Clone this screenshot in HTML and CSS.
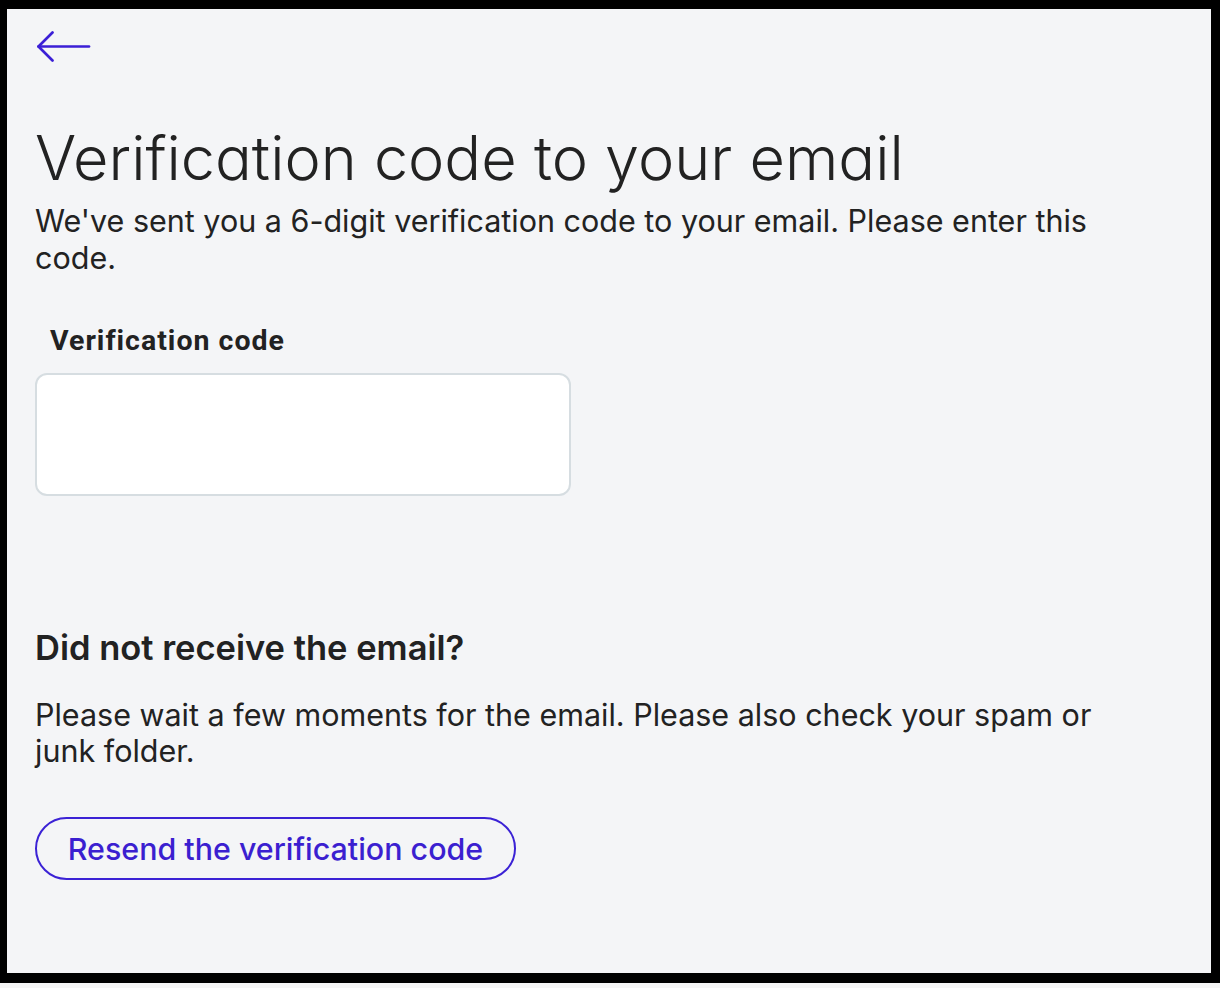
FILE: index.html
```html
<!DOCTYPE html>
<html lang="en">
<head>
<meta charset="utf-8">
<title>Verification code</title>
<link rel="stylesheet" href="styles.css">
</head>
<body>
<div class="frame">
  <main class="page">
    <a class="back" href="#" aria-label="Back">
      <svg width="56" height="34" viewBox="0 0 56 34" fill="none" stroke="currentColor" stroke-width="2.7" stroke-linecap="round" stroke-linejoin="round">
        <path d="M54 15.5H3.5"/>
        <path d="M17.5 1.5L3.5 15.5L17.5 29.5"/>
      </svg>
    </a>
    <h1 class="title">Verification code to your email</h1>
    <p class="lead">We've sent you a 6-digit verification code to your email. Please enter this code.</p>
    <label class="field-label" for="code">Verification code</label>
    <input class="field-input" id="code" type="text" inputmode="numeric">
    <h2 class="subtitle">Did not receive the email?</h2>
    <p class="note">Please wait a few moments for the email. Please also check your spam or junk folder.</p>
    <button class="resend" type="button">Resend the verification code</button>
  </main>
</div>
</body>
</html>
```

FILE: styles.css
```css
html, body {
  margin: 0;
  padding: 0;
  background: #f5f5f5;
}

.frame {
  box-sizing: border-box;
  height: 983px;
  border-style: solid;
  border-color: #000;
  border-width: 9px 9px 10px 7px;
  background: #f4f5f7;
}

.page {
  padding: 22px 28px 0 28px;
  font-family: Inter, "Noto Sans", sans-serif;
  color: #222;
}

.back {
  display: block;
  width: 56px;
  height: 34px;
  color: #3b1fd6;
}

.back svg {
  display: block;
}

.title {
  margin: 58px 0 0 0;
  font-size: 61.2px;
  line-height: 70px;
  font-weight: 300;
  font-feature-settings: "cv11" 1;
  color: #222;
}

.lead {
  margin: 9px 0 0 0;
  max-width: 1110px;
  font-size: 30.5px;
  line-height: 37px;
  font-weight: 400;
}

.field-label {
  display: block;
  margin: 48px 0 0 15px;
  font-family: Roboto, "Noto Sans", sans-serif;
  font-size: 28.5px;
  line-height: 34px;
  font-weight: 700;
  letter-spacing: 1px;
  color: #222;
}

.field-input {
  display: block;
  box-sizing: border-box;
  width: 536px;
  height: 123px;
  margin-top: 15px;
  border: 2px solid #d6dde1;
  border-radius: 12px;
  background: #fff;
  font-size: 28px;
  padding: 0 20px;
  outline: none;
}

.subtitle {
  margin: 131px 0 0 0;
  font-size: 34.5px;
  line-height: 42px;
  font-weight: 600;
  color: #222;
}

.note {
  margin: 28px 0 0 0;
  max-width: 1110px;
  font-size: 30.5px;
  line-height: 36px;
}

.resend {
  display: block;
  margin-top: 48px;
  box-sizing: border-box;
  width: 481px;
  height: 63px;
  border: 2px solid #3b22d5;
  border-radius: 32px;
  background: transparent;
  color: #3b1fd0;
  font-family: Inter, "Noto Sans", sans-serif;
  font-size: 30.4px;
  font-weight: 500;
  cursor: pointer;
  padding: 0;
}
```
